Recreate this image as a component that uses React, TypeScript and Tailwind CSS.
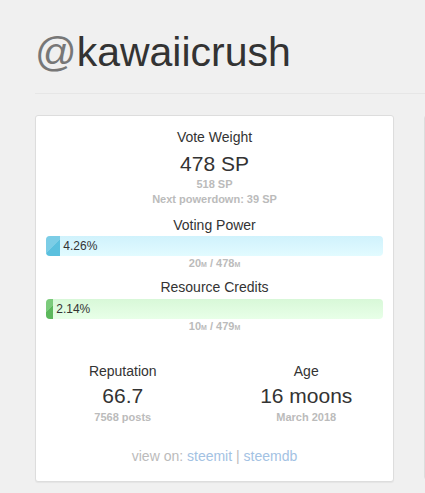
function Bar({ pct, label, fill, bg }: { pct: number; label: string; fill: string; bg: string }) {
  return (
    <div className={`flex h-[20px] overflow-hidden rounded-[4px] ${bg}`}>
      <div className={`h-full shrink-0 ${fill}`} style={{ width: `${pct}%` }} />
      <span className="ml-[3px] text-[12px] leading-[20px] text-[#333]">{label}</span>
    </div>
  )
}

function Mana({ cur, max }: { cur: string; max: string }) {
  return (
    <div className="text-[11px] font-bold leading-[14px] text-[#bbb]">
      {cur}<small className="text-[7px]">M</small> / {max}<small className="text-[7px]">M</small>
    </div>
  )
}

export default function App() {
  return (
    <main
      className="min-h-[493px] overflow-hidden bg-[#f0f0f0] pl-[35px]"
      style={{ fontFamily: '"Liberation Sans", Arial, sans-serif' }}
    >
      <div className="border-b border-[#e6e6e6]">
        <h1 className="mt-[29px] mb-[18px] text-[41px] leading-[46px] text-[#333]">
          <span className="text-[#777]">@</span>kawaiicrush
        </h1>
      </div>

      <div className="mt-[21px] flex gap-[30px]">
        <div className="w-[359px] shrink-0 rounded-[3px] border border-[#ddd] bg-white px-[10px] pt-[11px] pb-[15px] text-center text-[#333] shadow-[0_1px_1px_rgba(0,0,0,0.05)]">
          <div className="text-[14px] leading-[20px]">Vote Weight</div>
          <div className="mt-[5px] text-[21px] leading-[24px]">478 SP</div>
          <div className="mt-px text-[11px] font-bold leading-[15px] text-[#bbb]">518 SP</div>
          <div className="text-[11px] font-bold leading-[15px] text-[#bbb]">Next powerdown: 39 SP</div>

          <div className="mt-[8px] text-[14px] leading-[20px]">Voting Power</div>
          <div className="mt-px text-left">
            <Bar
              pct={4.26}
              label="4.26%"
              fill="bg-[linear-gradient(135deg,#7ccde6_50%,#5bc0de_50%)]"
              bg="bg-gradient-to-b from-[#d0f2fc] to-[#e2fbff]"
            />
          </div>
          <Mana cur="20" max="478" />

          <div className="mt-[5px] text-[14px] leading-[20px]">Resource Credits</div>
          <div className="mt-[2px] text-left">
            <Bar
              pct={2.14}
              label="2.14%"
              fill="bg-[linear-gradient(135deg,#7ccb7c_50%,#5cb85c_50%)]"
              bg="bg-gradient-to-b from-[#d8f8d8] to-[#e8ffe8]"
            />
          </div>
          <Mana cur="10" max="479" />

          <div className="mx-[-15px] mt-[26px] grid grid-cols-2">
            <div>
              <div className="text-[14px] leading-[20px]">Reputation</div>
              <div className="mt-[3px] text-[21px] leading-[24px]">66.7</div>
              <div className="mt-[2px] text-[11px] font-bold leading-[15px] text-[#bbb]">7568 posts</div>
            </div>
            <div>
              <div className="text-[14px] leading-[20px]">Age</div>
              <div className="mt-[3px] text-[21px] leading-[24px]">16 moons</div>
              <div className="mt-[2px] text-[11px] font-bold leading-[15px] text-[#bbb]">March 2018</div>
            </div>
          </div>

          <div className="mt-[21px] text-[14px] leading-[20px] text-[#bbb]">
            view on: <a className="text-[#a3c2e3]">steemit</a> | <a className="text-[#a3c2e3]">steemdb</a>
          </div>
        </div>

        <div className="h-[365px] w-[359px] shrink-0 rounded-[3px] border border-[#ddd] bg-white" />
      </div>
    </main>
  )
}
